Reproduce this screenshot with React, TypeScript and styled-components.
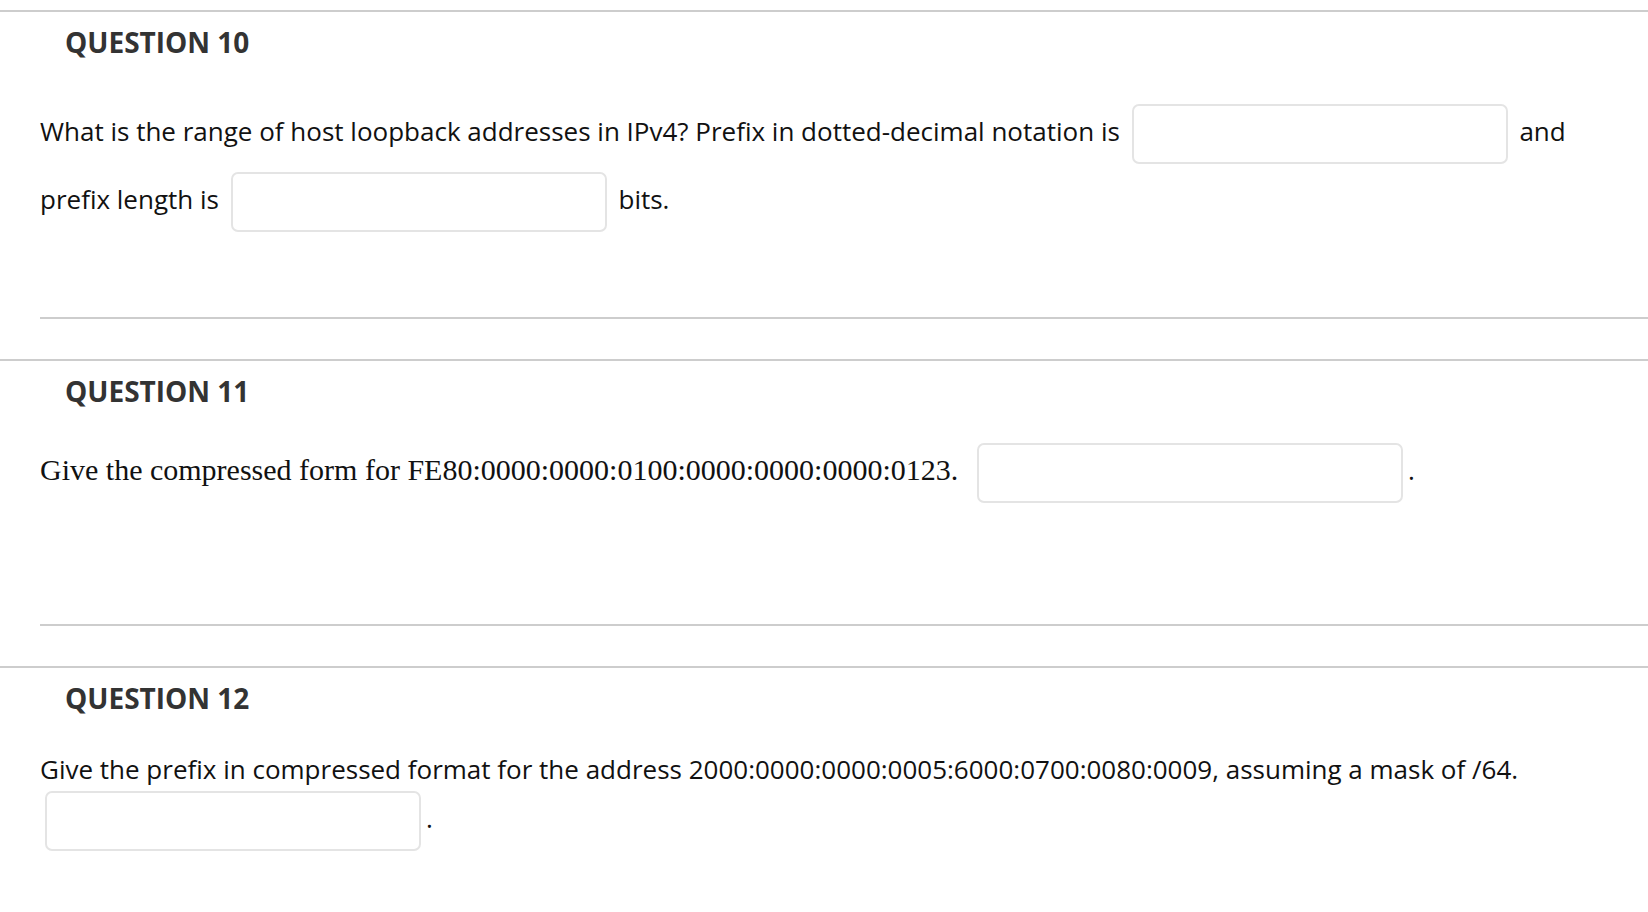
import React from 'react'
import styled, { createGlobalStyle } from 'styled-components'

const GlobalStyle = createGlobalStyle`
    html, body {
        margin: 0;
        padding: 0;
        background: #fff;
    }
    body {
        font-family: "Open Sans", "Liberation Sans", sans-serif;
        color: #111;
        overflow: hidden;
    }
`

const Page = styled.div`
    padding-top: 10px;
    width: 1648px;
`

const Question = styled.section`
    border-top: 2px solid #cdcdcd;
`

const Heading = styled.h3`
    margin: 15px 0 0 65px;
    font-size: 28px;
    line-height: 31px;
    font-weight: 700;
    color: #333;
`

const Body = styled.div<{ $top: number; $bottom: number }>`
    margin: ${p => p.$top}px 40px 0 40px;
    padding-bottom: ${p => p.$bottom}px;
    font-size: 26px;
    line-height: 36px;
`

const Serif = styled.span`
    font-family: "Liberation Serif", "Times New Roman", serif;
    font-size: 30px;
`

const Blank = styled.input.attrs({ type: 'text' })<{ $w: number; $ml?: number }>`
    display: inline-block;
    box-sizing: border-box;
    width: ${p => p.$w}px;
    height: 60px;
    margin: 4px 5px 4px ${p => p.$ml ?? 5}px;
    vertical-align: middle;
    border: 2px solid #e4e4e4;
    border-radius: 7px;
    background: #fff;
    font: inherit;
    outline: none;
`

const Rule = styled.hr`
    margin: 0 0 40px 40px;
    border: 0;
    border-top: 2px solid #cdcdcd;
`

const App: React.FC = () => {
    return (
        <Page>
            <GlobalStyle />
            <Question>
                <Heading>QUESTION 10</Heading>
                <Body $top={42} $bottom={81}>
                    What is the range of host loopback addresses in IPv4? Prefix in dotted-decimal notation is{' '}
                    <Blank $w={376} /> and prefix length is{' '}
                    <Blank $w={376} /> bits.
                </Body>
                <Rule />
            </Question>
            <Question>
                <Heading>QUESTION 11</Heading>
                <Body $top={32} $bottom={117}>
                    <Serif>Give the compressed form for FE80:0000:0000:0100:0000:0000:0000:0123.</Serif>{' '}
                    <Blank $w={426} $ml={12} />.
                </Body>
                <Rule />
            </Question>
            <Question>
                <Heading>QUESTION 12</Heading>
                <Body $top={37} $bottom={40}>
                    Give the prefix in compressed format for the address 2000:0000:0000:0005:6000:0700:0080:0009, assuming a mask of /64.{' '}
                    <Blank $w={376} />.
                </Body>
            </Question>
        </Page>
    )
}

export default App
